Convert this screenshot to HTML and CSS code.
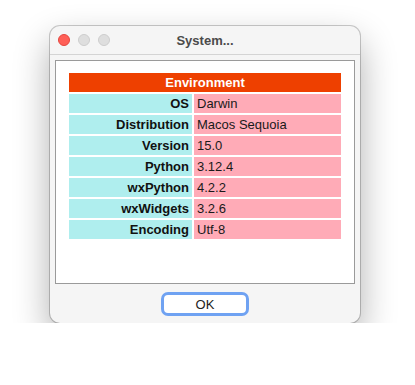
FILE: index.html
```html
<!DOCTYPE html>
<html lang="en">
<head>
  <meta charset="UTF-8" />
  <title>System...</title>
  <link rel="stylesheet" href="styles.css">
</head>
<body>
  <div class="window">
    <div class="titlebar">
      <div class="lights">
        <span class="light close"></span>
        <span class="light"></span>
        <span class="light"></span>
      </div>
      <div class="title">System...</div>
    </div>
    <div class="content">
      <div class="panel">
        <table class="info">
          <tr><th colspan="2" class="head">Environment</th></tr>
          <tr><td class="key">OS</td><td class="val">Darwin</td></tr>
          <tr><td class="key">Distribution</td><td class="val">Macos Sequoia</td></tr>
          <tr><td class="key">Version</td><td class="val">15.0</td></tr>
          <tr><td class="key">Python</td><td class="val">3.12.4</td></tr>
          <tr><td class="key">wxPython</td><td class="val">4.2.2</td></tr>
          <tr><td class="key">wxWidgets</td><td class="val">3.2.6</td></tr>
          <tr><td class="key">Encoding</td><td class="val">Utf-8</td></tr>
        </table>
      </div>
      <div class="buttons">
        <button class="ok">OK</button>
      </div>
    </div>
  </div>
</body>
</html>
```

FILE: styles.css
```css
:root {
  --win-bg: #f5f5f5;
  --orange: #ee4000;
  --cyan: #afeeee;
  --pink: #ffabb7;
  --ring: #6fa2f2;
}

* {
  margin: 0; padding: 0; box-sizing: border-box;
  font-family: 'Liberation Sans', Arial, sans-serif;
}

body {
  background: #fff;
  padding: 26px 0 0 50px;
}

.window {
  width: 310px;
  height: 297px;
  background: var(--win-bg);
  border-radius: 10px;
  box-shadow: 0 0 0 1px rgba(0,0,0,0.2), 0 16px 36px rgba(0,0,0,0.32);
  display: flex;
  flex-direction: column;
  overflow: hidden;
}

.titlebar {
  height: 29px;
  border-bottom: 1px solid #d4d4d4;
  position: relative;
  display: flex;
  align-items: center;
  justify-content: center;
}

.lights {
  position: absolute;
  left: 8px;
  top: 8px;
  display: flex;
  gap: 8px;
}

.light {
  width: 12px;
  height: 12px;
  border-radius: 50%;
  background: #dedede;
  border: 1px solid #cdcdcd;
}

.light.close {
  background: #ff5f57;
  border-color: #e3463f;
}

.title {
  font-size: 13px;
  font-weight: bold;
  color: #4b4b4b;
}

.content {
  flex: 1;
  padding: 5px 5px 0 5px;
  display: flex;
  flex-direction: column;
}

.panel {
  height: 224px;
  background: #fff;
  border: 1px solid #9a9a9a;
  padding: 10px 11px;
}

.info {
  width: 100%;
  border-spacing: 2px;
  font-size: 13px;
}

.info td, .info th {
  height: 19px;
  padding: 0 3px;
  line-height: 15px;
}

.head {
  background: var(--orange);
  color: #fff;
  text-align: center;
  font-weight: bold;
}

.key {
  width: 123px;
  background: var(--cyan);
  text-align: right;
  font-weight: bold;
  color: #111;
}

.val {
  background: var(--pink);
  color: #1a1a1a;
}

.buttons {
  flex: 1;
  display: flex;
  justify-content: center;
  padding-top: 8px;
}

.ok {
  width: 88px;
  height: 24px;
  background: #fff;
  border: 3px solid var(--ring);
  border-radius: 7px;
  font-size: 13px;
  color: #222;
}
```
